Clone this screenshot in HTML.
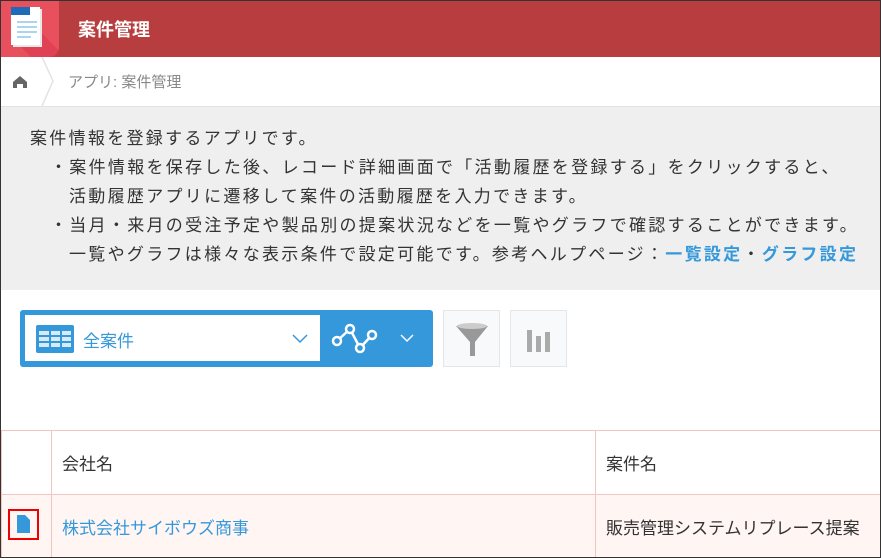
<!DOCTYPE html>
<html><head><meta charset="utf-8"><style>
*{box-sizing:border-box;margin:0;padding:0}
body{width:881px;height:558px;overflow:hidden;font-family:"Liberation Sans","Noto Sans CJK JP",sans-serif;background:#fff;position:relative}
.frame{position:absolute;inset:0;border:1px solid #333;pointer-events:none;z-index:9}
.hdr{position:absolute;left:0;top:0;width:881px;height:57px;background:#b73d3e}
.hdr .t{position:absolute;left:78px;top:16px;color:#fff;font-weight:bold;font-size:18px}
.logo{position:absolute;left:1px;top:1px;width:58px;height:56px;background:#e9505e;border-radius:0 0 10px 0}
.bc{position:absolute;top:57px;left:0;width:881px;height:49px;background:#fff}
.bc .txt{position:absolute;left:68px;top:14px;color:#888;font-size:15px}
.desc{position:absolute;top:106px;left:0;width:881px;height:184px;background:#efefef;border-top:1px solid #e3e3e3;font-size:17px;color:#333;line-height:29px;padding:17px 0 0 30px;letter-spacing:2.3px;white-space:nowrap}
.desc .i{padding-left:20px}
.desc .ii{padding-left:39px}
.desc a{color:#3498db;font-weight:bold;text-decoration:none}
.tb{position:absolute;left:20px;top:310px;width:413px;height:57px;background:#3498db;border-radius:3px}
.sel{position:absolute;left:5px;top:5px;width:295px;height:46px;background:#fff}
.sel .n{position:absolute;left:58px;top:12px;color:#3498db;font-size:17px}
.btn{position:absolute;top:310px;width:57px;height:57px;background:#f7f9fa;border:1px solid #e3e7e8}
table{position:absolute;left:1px;top:430px;border-collapse:collapse;width:880px}
td{border:1px solid #f1c6c0;font-size:17px;color:#333;padding-left:10px}
</style></head><body>
<div class="hdr"><div class="logo">
<svg width="58" height="56"><polygon points="20,10 58,50 58,56 30,56 20,46" fill="#d8324a" opacity=".5"/><rect x="12" y="8" width="29" height="38" fill="#e8e8e8"/><rect x="10" y="6" width="29" height="38" fill="#fff"/><rect x="10" y="6" width="19" height="8" fill="#1e6bb8"/><g stroke="#a9d6ec" stroke-width="2"><line x1="16" y1="21" x2="36" y2="21"/><line x1="16" y1="26" x2="36" y2="26"/><line x1="16" y1="31" x2="36" y2="31"/><line x1="16" y1="36" x2="30" y2="36"/></g></svg></div>
<div class="t">案件管理</div></div>
<div class="bc">
<svg width="60" height="49" style="position:absolute;left:0;top:0"><path d="M13 25 L20 19 L27 25 V31 H23 V27 H17 V31 H13Z" fill="#666"/><polyline points="42,0 53,24 42,49" fill="none" stroke="#e3e3e3" stroke-width="1.5"/></svg>
<div class="txt">アプリ: 案件管理</div></div>
<div class="desc">
<div>案件情報を登録するアプリです。</div>
<div class="i">・案件情報を保存した後、レコード詳細画面で「活動履歴を登録する」をクリックすると、</div>
<div class="ii">活動履歴アプリに遷移して案件の活動履歴を入力できます。</div>
<div class="i">・当月・来月の受注予定や製品別の提案状況などを一覧やグラフで確認することができます。</div>
<div class="ii">一覧やグラフは様々な表示条件で設定可能です。参考ヘルプページ：<a>一覧設定</a>・<a>グラフ設定</a></div>
</div>
<div class="tb"><div class="sel">
<svg width="295" height="46" style="position:absolute;left:0;top:0"><rect x="11" y="10" width="38" height="28" rx="2" fill="#3498db"/><g fill="#d6eaf8"><rect x="14" y="16" width="10" height="4"/><rect x="26" y="16" width="9" height="4"/><rect x="37" y="16" width="9" height="4"/><rect x="14" y="22" width="10" height="4"/><rect x="26" y="22" width="9" height="4"/><rect x="37" y="22" width="9" height="4"/><rect x="14" y="28" width="10" height="4"/><rect x="26" y="28" width="9" height="4"/><rect x="37" y="28" width="9" height="4"/></g><polyline points="268,20 275,27 282,20" fill="none" stroke="#3498db" stroke-width="1.5"/></svg>
<div class="n">全案件</div></div>
<svg width="113" height="57" style="position:absolute;left:300px;top:0"><polyline points="17,31 30,19 40,38 52,25" fill="none" stroke="#fff" stroke-width="2.5"/><g fill="#3498db" stroke="#fff" stroke-width="2.5"><circle cx="17" cy="31" r="4"/><circle cx="30" cy="19" r="4"/><circle cx="40" cy="38" r="4"/><circle cx="52" cy="25" r="4"/></g><polyline points="81,25 87,31 93,25" fill="none" stroke="#fff" stroke-width="1.5"/></svg>
</div>
<div class="btn" style="left:443px"><svg width="57" height="57"><path d="M12 15 H44 L31 31 V45 H26 V31Z" fill="#999"/><ellipse cx="28" cy="15" rx="15" ry="3" fill="#ccc"/></svg></div>
<div class="btn" style="left:510px"><svg width="57" height="57"><rect x="16" y="19" width="5" height="22" fill="#aaa"/><rect x="25" y="25" width="5" height="16" fill="#aaa"/><rect x="34" y="21" width="5" height="20" fill="#aaa"/></svg></div>
<table>
<tr style="height:64px"><td style="width:50px"></td><td style="width:544px">会社名</td><td>案件名</td></tr>
<tr style="height:63px;background:#fff5f3"><td style="padding:0;position:relative"><div style="position:absolute;left:6px;top:14px;width:31px;height:31px;border:2px solid #e00"><svg width="27" height="27"><path d="M7 4 H15 L20 9 V22 H7Z" fill="#3498db"/></svg></div></td><td style="color:#3498db">株式会社サイボウズ商事</td><td>販売管理システムリプレース提案</td></tr>
</table>
<div class="frame"></div>
</body></html>
